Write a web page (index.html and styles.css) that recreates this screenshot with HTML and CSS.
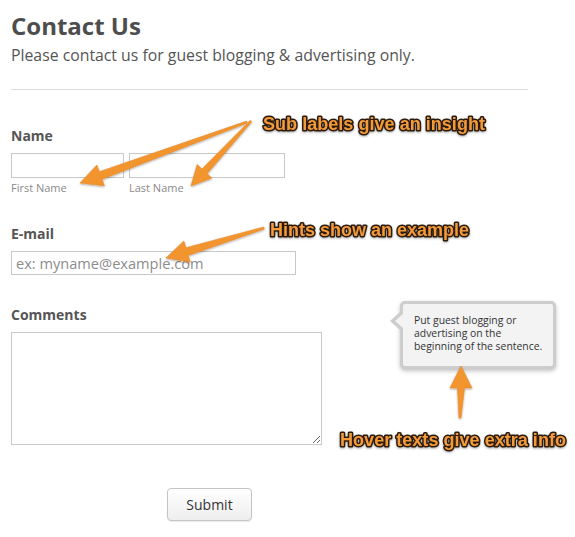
FILE: index.html
```html
<!DOCTYPE html>
<html lang="en">
<head>
<meta charset="utf-8">
<title>Contact Us</title>
<link rel="stylesheet" href="styles.css">
</head>
<body>
<div class="page">
  <header class="head">
    <h1 class="title">Contact Us</h1>
    <p class="subtitle">Please contact us for guest blogging &amp; advertising only.</p>
  </header>
  <hr class="rule">
  <form class="form">
    <div class="field field-name">
      <label class="label">Name</label>
      <div class="name-row">
        <div class="sub">
          <input class="input input-first" type="text">
          <span class="sublabel">First Name</span>
        </div>
        <div class="sub">
          <input class="input input-last" type="text">
          <span class="sublabel">Last Name</span>
        </div>
      </div>
    </div>
    <div class="field field-email">
      <label class="label">E-mail</label>
      <input class="input input-email" type="text" placeholder="ex: myname@example.com">
    </div>
    <div class="field field-comments">
      <label class="label label-comments">Comments</label>
      <textarea class="textarea"></textarea>
    </div>
    <div class="actions">
      <button class="submit" type="button">Submit</button>
    </div>
  </form>

  <div class="tooltip">Put guest blogging or advertising on the beginning of the sentence.</div>

  <svg class="notes" width="575" height="537" viewBox="0 0 575 537">
    <defs>
      <filter id="sh" x="-20%" y="-20%" width="140%" height="140%">
        <feDropShadow dx="0" dy="1" stdDeviation="0.8" flood-color="#000" flood-opacity="0.35"/>
      </filter>
    </defs>
    <g class="arrows" filter="url(#sh)">
      <polygon points="246.7,121.1 99.3,171.7 96.9,165.1 80,183 104.4,185.8 102.0,179.2 247.3,122.9"/>
      <polygon points="250.3,120.3 202.0,168.9 197.2,164.5 191,186 211.9,178.1 207.1,173.7 251.7,121.7"/>
      <polygon points="263.7,227.0 185.9,247.7 183.8,241.0 166,258 190.3,262.1 188.2,255.4 264.3,229.0"/>
      <polygon points="461,418 464.5,388 472,388 461,366 450,388 457.5,388 459,418"/>
    </g>
    <g class="note-text" filter="url(#sh)">
      <text x="263" y="130" textLength="222" lengthAdjust="spacingAndGlyphs">Sub labels give an insight</text>
      <text x="270" y="236" textLength="199" lengthAdjust="spacingAndGlyphs">Hints show an example</text>
      <text x="340" y="446" textLength="226" lengthAdjust="spacingAndGlyphs">Hover texts give extra info</text>
    </g>
  </svg>
</div>
</body>
</html>
```
FILE: styles.css
```css
* { box-sizing: border-box; }

html, body {
  margin: 0;
  background: #ffffff;
}

body {
  font-family: "Open Sans", "DejaVu Sans", sans-serif;
  color: #555555;
}

.page {
  position: relative;
  width: 575px;
  height: 537px;
  padding: 12px 0 0 11px;
  overflow: hidden;
}

.title {
  margin: 0;
  font-size: 24px;
  line-height: 28px;
  font-weight: 700;
  color: #4d4d4d;
  letter-spacing: 0;
}

.subtitle {
  margin: 5px 0 0;
  font-size: 15.8px;
  line-height: 20px;
  color: #555555;
}

.rule {
  margin: 24px 0 0;
  width: 517px;
  border: 0;
  border-top: 1px solid #dddddd;
  height: 0;
}

.form {
  display: flex;
  flex-direction: column;
}

.field {
  display: flex;
  flex-direction: column;
  align-items: flex-start;
}

.field-name { margin-top: 37px; }
.field-email { margin-top: 30px; }
.field-comments { margin-top: 31px; }

.label {
  font-size: 14px;
  line-height: 18px;
  font-weight: 700;
  color: #555555;
  margin-bottom: 8px;
}

.label-comments { margin-bottom: 8px; }

.name-row {
  display: flex;
  gap: 5px;
}

.sub {
  display: flex;
  flex-direction: column;
}

.input {
  height: 25px;
  border: 1px solid #c8c8c8;
  border-radius: 0;
  background: #ffffff;
  padding: 0 5px;
  font-family: "Open Sans", "DejaVu Sans", sans-serif;
  font-size: 14px;
  color: #555555;
  outline: none;
}

.input-first { width: 113px; }
.input-last { width: 156px; }
.input-email { width: 285px; height: 24px; padding: 0 4px; font-size: 14.6px; }

.input::placeholder {
  color: #8c8c8c;
  opacity: 1;
}

.sublabel {
  margin-top: 3px;
  font-size: 11px;
  line-height: 14px;
  color: #8a8a8a;
}

.textarea {
  width: 311px;
  height: 113px;
  border: 1px solid #c8c8c8;
  border-radius: 0;
  background: #ffffff;
  resize: both;
  outline: none;
  margin: 0;
}

.actions {
  display: flex;
  padding-left: 156px;
  margin-top: 43px;
}

.submit {
  width: 85px;
  height: 33px;
  border: 1px solid #c4c4c4;
  border-radius: 4px;
  background: linear-gradient(#ffffff, #eeeeee);
  box-shadow: 0 1px 1px rgba(0,0,0,0.08);
  font-family: "Open Sans", "DejaVu Sans", sans-serif;
  font-size: 14px;
  color: #333333;
  padding: 0;
}

.tooltip {
  position: absolute;
  left: 400px;
  top: 301px;
  width: 156px;
  height: 68px;
  padding: 10px 6px 0 11px;
  background: #f3f3f3;
  border: 3px solid #cdcdcd;
  border-radius: 5px;
  box-shadow: 0 2px 4px rgba(0,0,0,0.25);
  font-size: 10.4px;
  line-height: 13px;
  color: #333333;
}

.tooltip::before,
.tooltip::after {
  content: "";
  position: absolute;
  width: 0;
  height: 0;
  border-style: solid;
}

.tooltip::before {
  left: -13px;
  top: 8px;
  border-width: 9px 10px 9px 0;
  border-color: transparent #cdcdcd transparent transparent;
}

.tooltip::after {
  left: -8px;
  top: 10px;
  border-width: 7px 8px 7px 0;
  border-color: transparent #f3f3f3 transparent transparent;
}

.notes {
  position: absolute;
  left: 0;
  top: 0;
  pointer-events: none;
}

.arrows polygon {
  fill: #f2952f;
  stroke: #e58a2a;
  stroke-width: 0.6;
  stroke-linejoin: round;
}

.note-text text {
  font-family: "Liberation Sans", Arial, sans-serif;
  font-weight: 700;
  font-size: 18px;
  fill: #f39a3b;
  stroke: #2b1a0c;
  stroke-width: 3px;
  stroke-linejoin: round;
  paint-order: stroke fill;
}
```
